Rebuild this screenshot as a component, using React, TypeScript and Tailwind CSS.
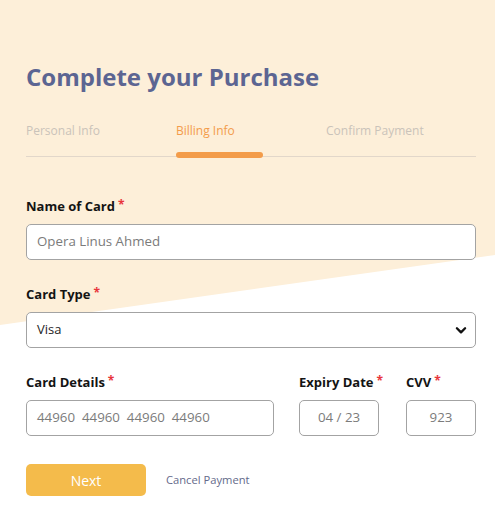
import React from "react";

function Req() {
  return <span className="ml-[3px] text-[12px] leading-none text-[#e8353b] relative -top-[2px]">*</span>;
}

function Label({ children }: { children: React.ReactNode }) {
  return (
    <div className="text-[13px] leading-[20px] font-bold text-[#141414] whitespace-nowrap">
      {children}
      <Req />
    </div>
  );
}

export default function App() {
  return (
    <div
      className="relative w-[495px] h-[512px] bg-white overflow-hidden"
      style={{ fontFamily: '"Open Sans", "Noto Sans", sans-serif' }}
    >
      <svg className="absolute inset-0 w-full h-full" viewBox="0 0 495 512" preserveAspectRatio="none">
        <polygon points="0,0 495,0 495,255 0,325" fill="#fdefd9" />
      </svg>
      <div className="relative w-[450px] ml-[26px] pt-[61px] flex flex-col">
        <h1 className="text-[24px] leading-[32px] font-bold text-[#5c6592]">Complete your Purchase</h1>

        <div className="mt-[30px] border-b border-[#e2d7ca] grid grid-cols-3">
          <div className="text-[12px] leading-[16px] text-[#cac3ba]">Personal Info</div>
          <div className="flex flex-col">
            <div className="text-[12px] leading-[16px] text-[#f39c4b]">Billing Info</div>
            <div className="mt-[13px] -mb-[2px] h-[6px] w-[87px] rounded-full bg-[#f39c4a]" />
          </div>
          <div className="text-[12px] leading-[16px] text-[#cac3ba]">Confirm Payment</div>
        </div>

        <div className="mt-[39px] flex flex-col gap-[8px]">
          <Label>Name of Card</Label>
          <div className="h-[36px] rounded-[5px] border border-[#a3a3a3] bg-white flex items-center px-[10px] text-[13.3px] text-[#7b7b7b]">
            Opera Linus Ahmed
          </div>
        </div>

        <div className="mt-[24px] flex flex-col gap-[8px]">
          <Label>Card Type</Label>
          <div className="h-[36px] rounded-[5px] border border-[#a3a3a3] bg-white flex items-center justify-between pl-[10px] pr-[7px] text-[13px] text-[#1e1e1e]">
            <span>Visa</span>
            <svg width="14" height="14" viewBox="0 0 24 24" fill="none" stroke="#111" strokeWidth="4" strokeLinecap="round" strokeLinejoin="round">
              <path d="M5 9l7 7 7-7" />
            </svg>
          </div>
        </div>

        <div className="mt-[24px] flex">
          <div className="w-[248px] flex flex-col gap-[8px]">
            <Label>Card Details</Label>
            <div className="h-[36px] rounded-[5px] border border-[#a3a3a3] bg-white flex items-center px-[10px] text-[13.3px] text-[#7b7b7b] whitespace-pre">
              {"44960  44960  44960  44960"}
            </div>
          </div>
          <div className="ml-[25px] w-[80px] flex flex-col gap-[8px]">
            <Label>Expiry Date</Label>
            <div className="h-[36px] rounded-[5px] border border-[#a3a3a3] bg-white flex items-center justify-center text-[13.3px] text-[#7b7b7b]">
              04 / 23
            </div>
          </div>
          <div className="ml-[27px] w-[70px] flex flex-col gap-[8px]">
            <Label>CVV</Label>
            <div className="h-[36px] rounded-[5px] border border-[#a3a3a3] bg-white flex items-center justify-center text-[13.3px] text-[#7b7b7b]">
              923
            </div>
          </div>
        </div>

        <div className="mt-[28px] flex items-center">
          <button className="w-[120px] h-[32px] rounded-[5px] bg-[#f4bb4b] text-white text-[14px] font-medium flex items-center justify-center">
            Next
          </button>
          <span className="ml-[20px] text-[11.2px] text-[#646a8a]">Cancel Payment</span>
        </div>
      </div>
    </div>
  );
}
